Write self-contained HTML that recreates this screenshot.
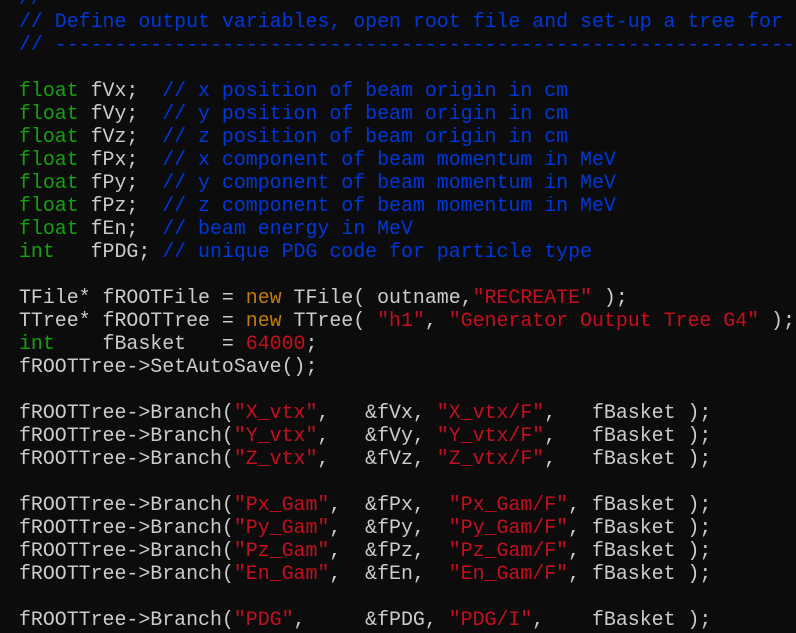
<!DOCTYPE html>
<html><head><meta charset="utf-8"><style>
html,body{margin:0;padding:0;background:#0c0c0c;overflow:hidden;width:796px;height:633px;position:relative}
pre{margin:0;position:absolute;left:19px;top:-13px;font-family:"Liberation Mono",monospace;font-size:19.9px;line-height:23px;color:#cccccc;white-space:pre}
.c{color:#0037da}.k{color:#13a10e}.s{color:#c50f1f}.n{color:#c17a0e}
</style></head><body><pre><span class="c">//</span>
<span class="c">// Define output variables, open root file and set-up a tree for</span>
<span class="c">// ---------------------------------------------------------------</span>

<span class="k">float</span> fVx;  <span class="c">// x position of beam origin in cm</span>
<span class="k">float</span> fVy;  <span class="c">// y position of beam origin in cm</span>
<span class="k">float</span> fVz;  <span class="c">// z position of beam origin in cm</span>
<span class="k">float</span> fPx;  <span class="c">// x component of beam momentum in MeV</span>
<span class="k">float</span> fPy;  <span class="c">// y component of beam momentum in MeV</span>
<span class="k">float</span> fPz;  <span class="c">// z component of beam momentum in MeV</span>
<span class="k">float</span> fEn;  <span class="c">// beam energy in MeV</span>
<span class="k">int</span>   fPDG; <span class="c">// unique PDG code for particle type</span>

TFile* fROOTFile = <span class="n">new</span> TFile( outname,<span class="s">"RECREATE"</span> );
TTree* fROOTTree = <span class="n">new</span> TTree( <span class="s">"h1"</span>, <span class="s">"Generator Output Tree G4"</span> );
<span class="k">int</span>    fBasket   = <span class="s">64000</span>;
fROOTTree->SetAutoSave();

fROOTTree->Branch(<span class="s">"X_vtx"</span>,   &amp;fVx, <span class="s">"X_vtx/F"</span>,   fBasket );
fROOTTree->Branch(<span class="s">"Y_vtx"</span>,   &amp;fVy, <span class="s">"Y_vtx/F"</span>,   fBasket );
fROOTTree->Branch(<span class="s">"Z_vtx"</span>,   &amp;fVz, <span class="s">"Z_vtx/F"</span>,   fBasket );

fROOTTree->Branch(<span class="s">"Px_Gam"</span>,  &amp;fPx,  <span class="s">"Px_Gam/F"</span>, fBasket );
fROOTTree->Branch(<span class="s">"Py_Gam"</span>,  &amp;fPy,  <span class="s">"Py_Gam/F"</span>, fBasket );
fROOTTree->Branch(<span class="s">"Pz_Gam"</span>,  &amp;fPz,  <span class="s">"Pz_Gam/F"</span>, fBasket );
fROOTTree->Branch(<span class="s">"En_Gam"</span>,  &amp;fEn,  <span class="s">"En_Gam/F"</span>, fBasket );

fROOTTree->Branch(<span class="s">"PDG"</span>,     &amp;fPDG, <span class="s">"PDG/I"</span>,    fBasket );</pre></body></html>
